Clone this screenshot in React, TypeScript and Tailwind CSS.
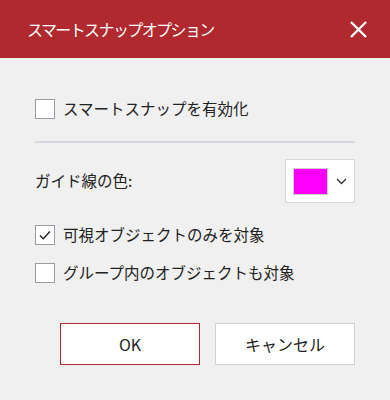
import React, { useState } from "react";

const font = { fontFamily: '"Noto Sans CJK JP", "Noto Sans", sans-serif' };

function CheckBox({
  checked,
  onChange,
  label,
}: {
  checked: boolean;
  onChange: () => void;
  label: string;
}) {
  return (
    <label className="flex items-center gap-2 cursor-pointer select-none">
      <span
        onClick={onChange}
        className="flex h-5 w-5 shrink-0 items-center justify-center border border-[#9a9aa3] bg-white"
      >
        {checked && (
          <svg width="14" height="14" viewBox="0 0 14 14" fill="none">
            <path d="M2 7.5l3.2 3.2L12 3.5" stroke="#222" strokeWidth="1.4" />
          </svg>
        )}
      </span>
      <span className="text-[15.5px] leading-none text-[#222]">{label}</span>
    </label>
  );
}

export default function App() {
  const [enabled, setEnabled] = useState(false);
  const [visibleOnly, setVisibleOnly] = useState(true);
  const [groupInner, setGroupInner] = useState(false);

  return (
    <div className="h-[400px] w-[390px] bg-[#f0f0f0]" style={font}>
      {/* title bar */}
      <div className="flex h-[58px] items-center justify-between bg-[#b0292f] pl-[27px] pr-[22px]">
        <span className="text-[16px] tracking-[-1.6px] text-white">スマートスナップオプション</span>
        <button className="flex h-5 w-5 items-center justify-center">
          <svg width="17" height="17" viewBox="0 0 17 17">
            <path d="M1 1l15 15M16 1L1 16" stroke="white" strokeWidth="2.4" />
          </svg>
        </button>
      </div>

      <div className="px-[35px] pt-[41px]">
        <CheckBox
          checked={enabled}
          onChange={() => setEnabled(!enabled)}
          label="スマートスナップを有効化"
        />

        <div className="mt-[22px] h-[2px] bg-[#d6d6de]" />

        <div className="mt-[16px] flex items-center justify-between">
          <span className="text-[15.5px] text-[#222]">ガイド線の色:</span>
          <button className="flex h-[44px] w-[70px] items-center gap-[8px] border border-[#d6d6de] bg-white pl-[7px]">
            <span className="h-[27px] w-[35px] border border-[#cfcfd6] bg-[#ff00ff]" />
            <svg width="11" height="7" viewBox="0 0 11 7" fill="none">
              <path d="M1 1l4.5 4.5L10 1" stroke="#333" strokeWidth="1.3" />
            </svg>
          </button>
        </div>

        <div className="mt-[22px] flex flex-col gap-[18px]">
          <CheckBox
            checked={visibleOnly}
            onChange={() => setVisibleOnly(!visibleOnly)}
            label="可視オブジェクトのみを対象"
          />
          <CheckBox
            checked={groupInner}
            onChange={() => setGroupInner(!groupInner)}
            label="グループ内のオブジェクトも対象"
          />
        </div>

        <div className="mt-[40px] flex justify-end gap-[15px]">
          <button className="h-[42px] w-[140px] border border-[#b0292f] bg-white text-[16px] text-[#222]">
            OK
          </button>
          <button className="h-[42px] w-[140px] border border-[#d0d0d8] bg-white text-[16px] text-[#222]">
            キャンセル
          </button>
        </div>
      </div>
    </div>
  );
}
